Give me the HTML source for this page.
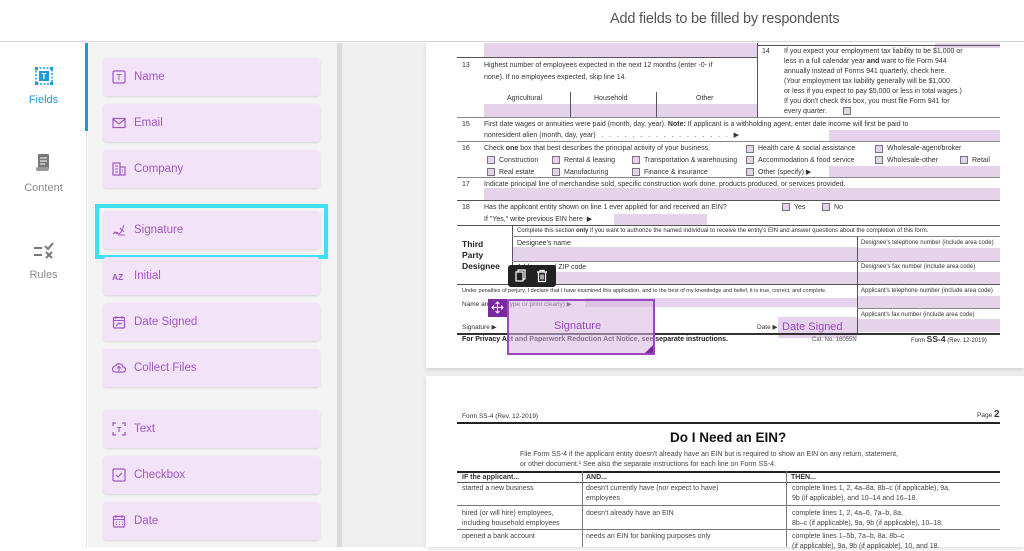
<!DOCTYPE html>
<html><head><meta charset="utf-8"><style>
*{margin:0;padding:0;box-sizing:border-box}
body{width:1024px;height:547px;overflow:hidden;background:#fff;font-family:"Liberation Sans",sans-serif;position:relative}
.a{position:absolute}
.hdr{left:0;top:0;width:1024px;height:42px;border-bottom:1px solid #d6d6d6;background:#fff}
.title{left:610px;top:11px;font-size:14.5px;color:#555;letter-spacing:-0.2px}
.nav{left:0;top:43px;width:87px;height:504px;background:#fff;border-right:1px solid #e2e2e2}
.navlbl{width:87px;text-align:center;font-size:11px;color:#888}
.panel{left:88px;top:43px;width:250px;height:504px;background:#f3f3f3}
.sb{left:337px;top:43px;width:5px;height:504px;background:#d9d9d9}
.card{left:103px;width:217px;height:38px;background:#f3e3f8;border-radius:4px;box-shadow:0 1px 2px rgba(0,0,0,.12);font-size:11.5px;color:#a257c4;padding-left:31px;line-height:38px}
.ic{position:absolute;left:9px;top:12px;width:14px;height:14px}
.doc{left:342px;top:43px;width:682px;height:504px;background:#efefef}
.pg{background:#fff;box-shadow:0 2px 4px rgba(0,0,0,.12)}
.f{background:#e5d3ec}
.t{font-size:7px;color:#333;white-space:nowrap;line-height:9px}
.hl{height:1px;background:#555}
.vl{width:1px;background:#555}
.cb{width:8px;height:8px;border:1px solid #777;background:#e5d3ec}
</style></head><body>
<div class="a hdr"></div>
<div class="a title">Add fields to be filled by respondents</div>
<div class="a nav"></div>
<div class="a" style="left:85px;top:43px;width:3px;height:88px;background:#1e9ad6"></div>
<svg class="a" style="left:34px;top:66px" width="20" height="20" viewBox="0 0 20 20"><rect x="2" y="2" width="16" height="16" fill="none" stroke="#1e9ad6" stroke-width="1.5" stroke-dasharray="2 1.5"/><rect x="1" y="1" width="3" height="3" fill="#1e9ad6"/><rect x="16" y="1" width="3" height="3" fill="#1e9ad6"/><rect x="1" y="16" width="3" height="3" fill="#1e9ad6"/><rect x="16" y="16" width="3" height="3" fill="#1e9ad6"/><rect x="5" y="5" width="10" height="10" fill="#1e9ad6"/><text x="10" y="13" font-size="8" fill="#fff" text-anchor="middle" font-family="Liberation Sans" font-weight="bold">T</text></svg>
<div class="a navlbl" style="left:0;top:94px;color:#1e9ad6">Fields</div>
<svg class="a" style="left:35px;top:153px" width="18" height="20" viewBox="0 0 18 20"><rect x="3" y="1" width="11" height="15" rx="1" fill="#777"/><rect x="1" y="14" width="13" height="4" rx="2" fill="#999"/><line x1="5" y1="5" x2="12" y2="5" stroke="#fff"/><line x1="5" y1="8" x2="12" y2="8" stroke="#fff"/><line x1="5" y1="11" x2="10" y2="11" stroke="#fff"/></svg>
<div class="a navlbl" style="left:0;top:182px">Content</div>
<svg class="a" style="left:33px;top:242px" width="22" height="18" viewBox="0 0 22 18"><line x1="1" y1="6" x2="9" y2="6" stroke="#777" stroke-width="2"/><line x1="1" y1="13" x2="9" y2="13" stroke="#777" stroke-width="2"/><path d="M12 4 l3 3 l5 -6" fill="none" stroke="#777" stroke-width="2"/><path d="M13 10 l6 6 M19 10 l-6 6" stroke="#777" stroke-width="2"/></svg>
<div class="a navlbl" style="left:0;top:269px">Rules</div>

<div class="a panel"></div>
<div class="a sb"></div>
<div class="a card" style="top:58px"><svg class="ic" viewBox="0 0 14 14"><rect x="1" y="1" width="12" height="12" rx="1.5" fill="none" stroke="#a257c4" stroke-width="1.2"/><text x="7" y="10.5" font-size="9" fill="#a257c4" text-anchor="middle" font-family="Liberation Sans">T</text></svg>Name</div>
<div class="a card" style="top:104px"><svg class="ic" viewBox="0 0 14 14"><rect x="1" y="2.5" width="12" height="9" fill="none" stroke="#a257c4" stroke-width="1.2"/><path d="M1 3 l6 5 l6 -5" fill="none" stroke="#a257c4" stroke-width="1.2"/></svg>Email</div>
<div class="a card" style="top:150px"><svg class="ic" viewBox="0 0 14 14"><rect x="1" y="1" width="7" height="12" fill="none" stroke="#a257c4" stroke-width="1.2"/><rect x="8" y="5" width="5" height="8" fill="none" stroke="#a257c4" stroke-width="1.2"/><path d="M3 4h3M3 7h3M3 10h3M10 8h1M10 10h1" stroke="#a257c4"/></svg>Company</div>
<div class="a" style="left:95px;top:204px;width:233px;height:55px;border:4px solid #3ee0f5"></div>
<div class="a card" style="top:211px"><svg class="ic" viewBox="0 0 14 14"><path d="M1 11 q3 -3 5 -1 q2 2 4 -3 l2 -5 M2 9 l4 2 M8 5 l4 4 M6 12 h7" fill="none" stroke="#a257c4" stroke-width="1"/></svg>Signature</div>
<div class="a card" style="top:257px"><svg class="ic" viewBox="0 0 14 14"><text x="0" y="11" font-size="8.5" font-weight="bold" fill="#a257c4" font-family="Liberation Sans">AZ</text></svg>Initial</div>
<div class="a card" style="top:303px"><svg class="ic" viewBox="0 0 14 14"><rect x="1.5" y="2.5" width="11" height="10.5" rx="1" fill="none" stroke="#a257c4" stroke-width="1.2"/><path d="M1.5 5.5h11M4 1v3M10 1v3M4 11 l3 -3 l1 1 l2 -1" fill="none" stroke="#a257c4"/></svg>Date Signed</div>
<div class="a card" style="top:349px"><svg class="ic" viewBox="0 0 14 14"><path d="M3.5 11 a3 3 0 0 1 0 -6 a4 4 0 0 1 7.5 1 a2.5 2.5 0 0 1 0 5 z" fill="none" stroke="#a257c4" stroke-width="1.2"/><path d="M7 10 v-4 M5 7.5 l2 -2 l2 2" fill="none" stroke="#a257c4" stroke-width="1.1"/></svg>Collect Files</div>
<div class="a card" style="top:410px"><svg class="ic" viewBox="0 0 14 14"><path d="M1 4v-3h3M10 1h3v3M13 10v3h-3M4 13h-3v-3" fill="none" stroke="#a257c4" stroke-width="1.3"/><text x="7" y="10" font-size="7.5" font-weight="bold" fill="#a257c4" text-anchor="middle" font-family="Liberation Sans">T</text></svg>Text</div>
<div class="a card" style="top:456px"><svg class="ic" viewBox="0 0 14 14"><rect x="1" y="1" width="12" height="12" rx="1" fill="none" stroke="#a257c4" stroke-width="1.2"/><path d="M4 7 l2 2 l4 -4" fill="none" stroke="#a257c4" stroke-width="1.2"/></svg>Checkbox</div>
<div class="a card" style="top:502px"><svg class="ic" viewBox="0 0 14 14"><rect x="1.5" y="2.5" width="11" height="10.5" rx="1" fill="none" stroke="#a257c4" stroke-width="1.2"/><path d="M1.5 5.5h11M4 1v3M10 1v3" stroke="#a257c4"/><path d="M4 8h1M7 8h1M10 8h1M4 10.5h1M7 10.5h1M10 10.5h1" stroke="#a257c4"/></svg>Date</div>

<div class="a doc"></div>
<!-- page 1 -->
<div class="a pg" style="left:426px;top:43px;width:598px;height:325px"></div>
<div class="a f" style="left:484px;top:43px;width:273px;height:14px"></div>
<div class="a f" style="left:935px;top:43px;width:65px;height:5px"></div>
<div class="a hl" style="left:457px;top:57px;width:300px"></div>
<div class="a vl" style="left:757px;top:43px;height:75px"></div>
<div class="a hl" style="left:757px;top:45px;width:243px"></div>
<div class="a t" style="left:462px;top:61px">13</div>
<div class="a t" style="left:484px;top:61px">Highest number of employees expected in the next 12 months (enter -0- if</div>
<div class="a t" style="left:484px;top:73px">none). If no employees expected, skip line 14.</div>
<div class="a t" style="left:507px;top:94px">Agricultural</div>
<div class="a t" style="left:594px;top:94px">Household</div>
<div class="a t" style="left:696px;top:94px">Other</div>
<div class="a f" style="left:484px;top:104px;width:273px;height:13px"></div>
<div class="a vl" style="left:570px;top:92px;height:25px"></div>
<div class="a vl" style="left:656px;top:92px;height:25px"></div>
<div class="a t" style="left:762px;top:47px">14</div>
<div class="a t" style="left:784px;top:47px;line-height:10px">If you expect your employment tax liability to be $1,000 or<br>less in a full calendar year <b>and</b> want to file Form 944<br>annually instead of Forms 941 quarterly, check here.<br>(Your employment tax liability generally will be $1,000<br>or less if you expect to pay $5,000 or less in total wages.)<br>If you don't check this box, you must file Form 941 for<br>every quarter.</div>
<div class="a cb" style="left:843px;top:107px"></div>
<div class="a hl" style="left:457px;top:117px;width:543px;background:#888"></div>
<div class="a t" style="left:462px;top:120px">15</div>
<div class="a t" style="left:484px;top:120px">First date wages or annuities were paid (month, day, year). <b>Note:</b> If applicant is a withholding agent, enter date income will first be paid to</div>
<div class="a t" style="left:484px;top:131px">nonresident alien (month, day, year) &nbsp; . &nbsp; . &nbsp; . &nbsp; . &nbsp; . &nbsp; . &nbsp; . &nbsp; . &nbsp; . &nbsp; . &nbsp; . &nbsp; . &nbsp; . &nbsp; . &nbsp; . &nbsp; . &nbsp; . &nbsp; ▶</div>
<div class="a f" style="left:829px;top:130px;width:171px;height:11px"></div>
<div class="a hl" style="left:457px;top:141px;width:543px;background:#888"></div>
<div class="a t" style="left:462px;top:144px">16</div>
<div class="a t" style="left:484px;top:144px">Check <b>one</b> box that best describes the principal activity of your business.</div>
<div class="a cb" style="left:746px;top:145px"></div><div class="a t" style="left:758px;top:144px">Health care &amp; social assistance</div>
<div class="a cb" style="left:875px;top:145px"></div><div class="a t" style="left:887px;top:144px">Wholesale-agent/broker</div>
<div class="a cb" style="left:487px;top:156px"></div><div class="a t" style="left:499px;top:156px">Construction</div>
<div class="a cb" style="left:552px;top:156px"></div><div class="a t" style="left:564px;top:156px">Rental &amp; leasing</div>
<div class="a cb" style="left:632px;top:156px"></div><div class="a t" style="left:644px;top:156px">Transportation &amp; warehousing</div>
<div class="a cb" style="left:746px;top:156px"></div><div class="a t" style="left:758px;top:156px">Accommodation &amp; food service</div>
<div class="a cb" style="left:875px;top:156px"></div><div class="a t" style="left:887px;top:156px">Wholesale-other</div>
<div class="a cb" style="left:960px;top:156px"></div><div class="a t" style="left:972px;top:156px">Retail</div>
<div class="a cb" style="left:487px;top:168px"></div><div class="a t" style="left:499px;top:168px">Real estate</div>
<div class="a cb" style="left:552px;top:168px"></div><div class="a t" style="left:564px;top:168px">Manufacturing</div>
<div class="a cb" style="left:632px;top:168px"></div><div class="a t" style="left:644px;top:168px">Finance &amp; insurance</div>
<div class="a cb" style="left:746px;top:168px"></div><div class="a t" style="left:758px;top:168px">Other (specify) ▶</div>
<div class="a f" style="left:829px;top:166px;width:171px;height:11px"></div>
<div class="a hl" style="left:457px;top:177px;width:543px;background:#888"></div>
<div class="a t" style="left:462px;top:180px">17</div>
<div class="a t" style="left:484px;top:180px">Indicate principal line of merchandise sold, specific construction work done, products produced, or services provided.</div>
<div class="a f" style="left:484px;top:188px;width:516px;height:12px"></div>
<div class="a hl" style="left:457px;top:200px;width:543px"></div>
<div class="a t" style="left:462px;top:203px">18</div>
<div class="a t" style="left:484px;top:203px">Has the applicant entity shown on line 1 ever applied for and received an EIN?</div>
<div class="a cb" style="left:782px;top:203px"></div><div class="a t" style="left:794px;top:203px">Yes</div>
<div class="a cb" style="left:822px;top:203px"></div><div class="a t" style="left:834px;top:203px">No</div>
<div class="a t" style="left:484px;top:215px">If "Yes," write previous EIN here &nbsp;▶</div>
<div class="a f" style="left:614px;top:214px;width:93px;height:11px"></div>
<div class="a hl" style="left:457px;top:225px;width:543px"></div>
<div class="a vl" style="left:512px;top:225px;height:59px"></div>
<div class="a t" style="left:517px;top:227px;font-size:6px">Complete this section <b>only</b> if you want to authorize the named individual to receive the entity's EIN and answer questions about the completion of this form.</div>
<div class="a hl" style="left:512px;top:236px;width:488px;background:#888"></div>
<div class="a t" style="left:462px;top:239px;font-size:8.5px;line-height:11px;font-weight:bold;color:#222">Third<br>Party<br>Designee</div>
<div class="a t" style="left:517px;top:239px">Designee's name</div>
<div class="a f" style="left:513px;top:247px;width:344px;height:14px"></div>
<div class="a vl" style="left:857px;top:236px;height:98px"></div>
<div class="a t" style="left:861px;top:239px;font-size:6px">Designee's telephone number (include area code)</div>
<div class="a f" style="left:858px;top:248px;width:142px;height:13px"></div>
<div class="a hl" style="left:512px;top:261px;width:488px;background:#888"></div>
<div class="a t" style="left:517px;top:263px">Address and ZIP code</div>
<div class="a f" style="left:513px;top:272px;width:344px;height:12px"></div>
<div class="a t" style="left:861px;top:263px;font-size:6px">Designee's fax number (include area code)</div>
<div class="a f" style="left:858px;top:272px;width:142px;height:12px"></div>
<div class="a hl" style="left:457px;top:284px;width:543px"></div>
<div class="a t" style="left:462px;top:287px;font-size:5.5px">Under penalties of perjury, I declare that I have examined this application, and to the best of my knowledge and belief, it is true, correct, and complete.</div>
<div class="a t" style="left:861px;top:287px;font-size:6px">Applicant's telephone number (include area code)</div>
<div class="a f" style="left:858px;top:296px;width:142px;height:12px"></div>
<div class="a t" style="left:462px;top:300px;font-size:6.5px">Name and title (type or print clearly) ▶</div>
<div class="a f" style="left:585px;top:298px;width:272px;height:9px"></div>
<div class="a hl" style="left:857px;top:308px;width:143px;background:#888"></div>
<div class="a t" style="left:861px;top:311px;font-size:6px">Applicant's fax number (include area code)</div>
<div class="a f" style="left:858px;top:319px;width:142px;height:13px"></div>
<div class="a t" style="left:462px;top:323px;font-size:6.5px">Signature ▶</div>
<div class="a t" style="left:757px;top:323px;font-size:6.5px">Date ▶</div>
<div class="a f" style="left:778px;top:317px;width:79px;height:21px"></div>
<div class="a" style="left:782px;top:321px;font-size:11px;color:#9a48bd">Date Signed</div>
<div class="a hl" style="left:457px;top:333px;width:543px;height:2px;background:#333"></div>
<div class="a t" style="left:462px;top:335px;font-size:7px;font-weight:bold;color:#222">For Privacy Act and Paperwork Reduction Act Notice, see separate instructions.</div>
<div class="a t" style="left:812px;top:336px;font-size:6px;color:#555">Cat. No. 16055N</div>
<div class="a t" style="left:911px;top:335px;font-size:6px">Form <b style="font-size:8.5px">SS-4</b> (Rev. 12-2019)</div>
<!-- signature field -->
<div class="a" style="left:507px;top:299px;width:148px;height:56px;border:2px solid #9a48bd;background:rgba(213,183,226,.55)"></div>
<div class="a" style="left:554px;top:320px;font-size:11px;color:#9a48bd">Signature</div>
<div class="a" style="left:645px;top:345px;width:0;height:0;border-left:8px solid transparent;border-bottom:8px solid #7a2a9e"></div>
<div class="a" style="left:488px;top:299px;width:19px;height:18px;background:#7a2a9e"></div>
<svg class="a" style="left:490px;top:300px" width="15" height="15" viewBox="0 0 15 15"><path d="M7.5 2v11M2 7.5h11M5.5 4l2-2 2 2M5.5 11l2 2 2-2M4 5.5l-2 2 2 2M11 5.5l2 2-2 2" fill="none" stroke="#fff" stroke-width="1"/></svg>
<div class="a" style="left:508px;top:265px;width:48px;height:22px;background:#222;border-radius:3px"></div>
<svg class="a" style="left:515px;top:269px" width="36" height="14" viewBox="0 0 36 14"><rect x="1" y="3" width="7" height="9" fill="none" stroke="#fff" stroke-width="1.2"/><path d="M3 3V1h7v9H8" fill="none" stroke="#fff" stroke-width="1.2"/><path d="M22 3h10M25 3V1.5h4V3M23.5 3.5v9h7v-9M26 5.5v5M28 5.5v5" fill="none" stroke="#fff" stroke-width="1.2"/></svg>

<!-- page 2 -->
<div class="a pg" style="left:426px;top:376px;width:598px;height:171px"></div>
<div class="a t" style="left:462px;top:412px;font-size:6.5px">Form SS-4 (Rev. 12-2019)</div>
<div class="a t" style="left:977px;top:410px;font-size:6.5px">Page <b style="font-size:10px">2</b></div>
<div class="a hl" style="left:457px;top:422px;width:543px;height:1.5px;background:#222"></div>
<div class="a" style="left:670px;top:430px;font-size:13.5px;font-weight:bold;color:#111">Do I Need an EIN?</div>
<div class="a t" style="left:520px;top:450px;line-height:9.5px;color:#444">File Form SS-4 if the applicant entity doesn't already have an EIN but is required to show an EIN on any return, statement,<br>or other document.¹ See also the separate instructions for each line on Form SS-4.</div>
<div class="a hl" style="left:457px;top:471px;width:543px;height:1.5px;background:#222"></div>
<div class="a t" style="left:462px;top:473px;font-weight:bold">IF the applicant...</div>
<div class="a t" style="left:586px;top:473px;font-weight:bold">AND...</div>
<div class="a t" style="left:791px;top:473px;font-weight:bold">THEN...</div>
<div class="a hl" style="left:457px;top:482px;width:543px"></div>
<div class="a vl" style="left:582px;top:471px;height:76px;background:#777"></div>
<div class="a vl" style="left:786px;top:471px;height:76px;background:#777"></div>
<div class="a t" style="left:462px;top:484px;color:#444">started a new business</div>
<div class="a t" style="left:586px;top:484px;color:#444;line-height:9.5px">doesn't currently have (nor expect to have)<br>employees</div>
<div class="a t" style="left:792px;top:484px;color:#444;line-height:9.5px">complete lines 1, 2, 4a–8a, 8b–c (if applicable), 9a,<br>9b (if applicable), and 10–14 and 16–18.</div>
<div class="a hl" style="left:457px;top:505px;width:543px;background:#777"></div>
<div class="a t" style="left:462px;top:509px;color:#444;line-height:9.5px">hired (or will hire) employees,<br>including household employees</div>
<div class="a t" style="left:586px;top:509px;color:#444">doesn't already have an EIN</div>
<div class="a t" style="left:792px;top:509px;color:#444;line-height:9.5px">complete lines 1, 2, 4a–6, 7a–b, 8a,<br>8b–c (if applicable), 9a, 9b (if applicable), 10–18.</div>
<div class="a hl" style="left:457px;top:529px;width:543px;background:#777"></div>
<div class="a t" style="left:462px;top:532px;color:#444">opened a bank account</div>
<div class="a t" style="left:586px;top:532px;color:#444">needs an EIN for banking purposes only</div>
<div class="a t" style="left:792px;top:532px;color:#444;line-height:9.5px">complete lines 1–5b, 7a–b, 8a, 8b–c<br>(if applicable), 9a, 9b (if applicable), 10, and 18.</div>
</body></html>
